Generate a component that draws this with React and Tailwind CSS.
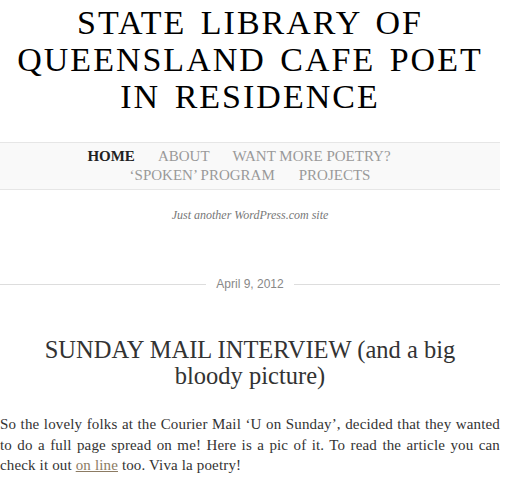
import React from 'react';

const serif = { fontFamily: '"Liberation Serif", "Times New Roman", serif' };

const navTop = ['HOME', 'ABOUT', 'WANT MORE POETRY?'];
const navBottom = ['\u2018SPOKEN\u2019 PROGRAM', 'PROJECTS'];

const App = () => {
  return (
    <div className="min-h-screen bg-white pr-[6px] text-[#333]" style={serif}>
      {/* Site title */}
      <header className="pt-[4px] text-center">
        <h1 className="text-[34px] leading-[37px] tracking-[2px] [word-spacing:4px] text-black">
          STATE LIBRARY OF<br />
          QUEENSLAND CAFE POET<br />
          IN RESIDENCE
        </h1>
      </header>

      {/* Navigation */}
      <nav className="mt-[27px] border-y border-[#e6e6e6] bg-[#f9f9f9] pt-[4px] pb-[4px] text-[15px] leading-[19px]">
        <ul className="flex justify-center gap-x-[23px] pr-[22px]">
          {navTop.map((item, i) => (
            <li key={item} className={i === 0 ? 'font-bold text-[#222]' : 'text-[#999]'}>{item}</li>
          ))}
        </ul>
        <ul className="flex justify-center gap-x-[24px]">
          {navBottom.map(item => (
            <li key={item} className="text-[#999]">{item}</li>
          ))}
        </ul>
      </nav>

      <p className="mt-[16px] text-center text-[12px] italic text-[#777]">Just another WordPress.com site</p>

      {/* Post */}
      <article className="mt-[51px]">
        <div className="flex items-center gap-[10px]">
          <div className="h-px flex-1 bg-[#ddd]"></div>
          <span className="text-[12px] text-[#888]" style={{ fontFamily: '"Liberation Sans", Arial, sans-serif' }}>April 9, 2012</span>
          <div className="h-px flex-1 bg-[#ddd]"></div>
        </div>

        <h2 className="mx-auto mt-[44px] max-w-[430px] text-center text-[24.5px] leading-[26px] text-[#333]">
          SUNDAY MAIL INTERVIEW (and a big bloody picture)
        </h2>

        <p className="mt-[25px] text-justify text-[15px] leading-[20.5px] tracking-[0.15px] text-[#333]">
          So the lovely folks at the Courier Mail {'\u2018'}U on Sunday{'\u2019'}, decided that they wanted to do a full page spread on me! Here is a pic of it. To read the article you can check it out{' '}
          <a href="#" className="text-[#8c7b63] underline">on line</a> too. Viva la poetry!
        </p>
      </article>
    </div>
  );
};

export default App;
